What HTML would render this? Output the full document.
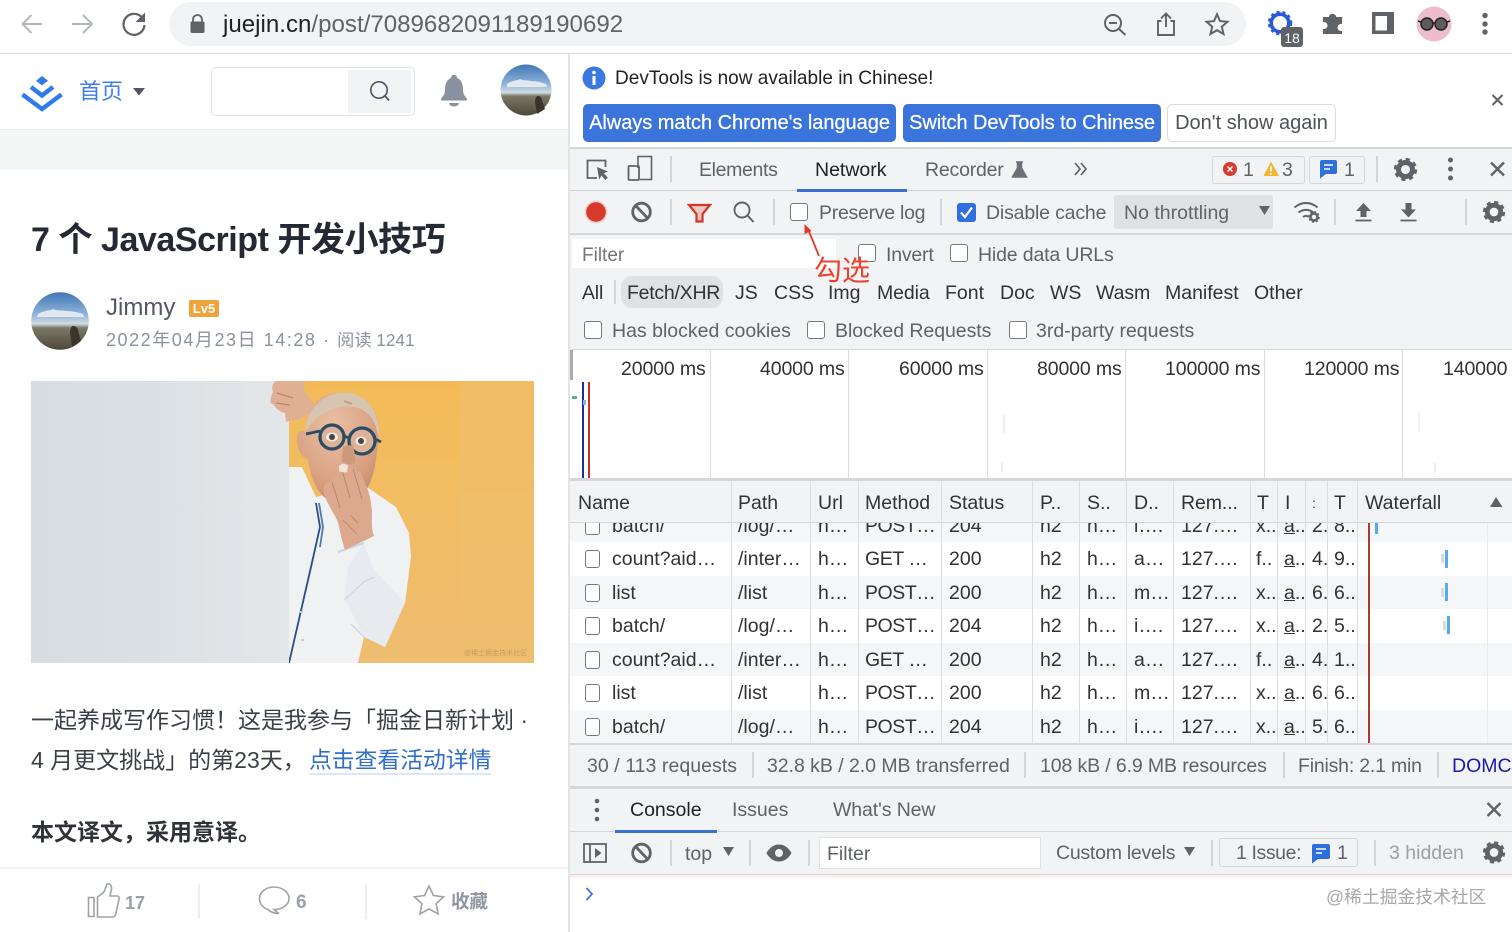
<!DOCTYPE html>
<html lang="zh"><head><meta charset="utf-8"><title>juejin.cn DevTools</title>
<style>
html,body{margin:0;padding:0;width:1512px;height:932px;overflow:hidden;background:#fff}
body{position:relative;font-family:"Liberation Sans","Noto Sans CJK SC",sans-serif;color:#3c4043;filter:blur(.3px)}
.b,.t{position:absolute}
.t{white-space:nowrap;line-height:0;font-size:19.5px;margin-top:.7px}
.g{color:#5f6368}
.d{color:#303236}
.cb{position:absolute;width:16px;height:16px;border:1.5px solid #75787c;border-radius:3px;background:#fff}
.sep{position:absolute;width:1.5px;background:#d3d6d9}
.btn{position:absolute;top:104px;height:38px;border-radius:5px;background:#3b74db;color:#fff;font-size:20px;line-height:39px;text-align:center;white-space:nowrap;-webkit-text-stroke:.25px #fff}
#tbl{position:absolute;left:570px;top:523px;width:942px;height:220px;overflow:hidden;background:#fff}
.r{position:absolute;left:0;width:942px;height:33.5px}
.a{background:#f5f6f7}
.r span{position:absolute;top:17px;line-height:0;white-space:nowrap;font-size:19.5px;color:#303236}
.r i{position:absolute;left:15px;top:8px;width:13px;height:16px;border:1.5px solid #75787c;border-radius:3px;background:#fff}
.c1{left:42px}.c2{left:168px}.c3{left:248px}.c4{left:295px;letter-spacing:-.45px}.c5{left:379px}.c6{left:470px}.c7{left:517px}.c8{left:564px}.c9{left:611px}.c10{left:686px}.c11{left:714px}.c12{left:742px}.c13{left:764px}
.v{position:absolute;width:1px;background:#dcdfe2}
</style></head><body>

<!-- browser chrome -->
<div class="b" style="left:0;top:0;width:1512px;height:53px;background:#fff;border-bottom:1.5px solid #d6d7d9"></div>
<div class="b" style="left:169px;top:2px;width:1077px;height:44px;border-radius:22px;background:#f1f3f4"></div>
<div class="t" style="left:223px;top:24px;font-size:24.1px;color:#202124">juejin.cn<span style="color:#5f6368">/post/7089682091189190692</span></div>

<!-- left page -->
<div class="b" style="left:0;top:129px;width:568px;height:41px;background:#f4f5f5;border-top:1px solid #eeeff0;box-sizing:border-box"></div>
<div class="b" style="left:568px;top:54px;width:2px;height:878px;background:#e3e4e6"></div>
<div class="t" style="left:79px;top:91px;font-size:22px;color:#3d7fe3">首页</div>
<div class="b" style="left:211px;top:67px;width:202px;height:47px;border:1.5px solid #dfe2e6;border-radius:5px;background:#fff"></div>
<div class="b" style="left:348px;top:70px;width:63px;height:43px;background:#f2f3f5"></div>
<div class="t" style="left:31px;top:239px;font-size:34px;font-weight:bold;color:#252933;letter-spacing:-.45px">7 个 JavaScript 开发小技巧</div>
<div class="t" style="left:106px;top:307px;font-size:24px;color:#515767">Jimmy</div>
<div class="b" style="left:189px;top:300px;width:30px;height:17px;border-radius:2px;background:#f0a33a;color:#fff;font-size:13px;font-weight:bold;line-height:17px;text-align:center">Lv5</div>
<div class="t" style="left:106px;top:339px;font-size:18px;color:#8a919f;letter-spacing:1.55px">2022年04月23日 14:28 · <span style="letter-spacing:0;font-size:17.2px">阅读 1241</span></div>
<div class="t" style="left:31px;top:719px;font-size:23px;color:#3a3f47">一起养成写作习惯！这是我参与「掘金日新计划 ·</div>
<div class="t" style="left:31px;top:759px;font-size:23px;color:#3a3f47">4 月更文挑战」的第23天，</div>
<div class="t" style="left:309px;top:759px;font-size:22.8px;color:#2f6fc9">点击查看活动详情</div>
<div class="b" style="left:309px;top:773px;width:182px;height:1.5px;background:#dbe8f8"></div>
<div class="t" style="left:31px;top:831px;font-size:23px;font-weight:bold;color:#2f3238">本文译文，采用意译。</div>
<div class="b" style="left:0;top:867px;width:568px;height:1.5px;background:#f0f1f2"></div>
<div class="b" style="left:198px;top:884px;width:1.5px;height:35px;background:#eceef0"></div>
<div class="b" style="left:365px;top:884px;width:1.5px;height:35px;background:#eceef0"></div>
<div class="t" style="left:125px;top:902px;font-size:18px;font-weight:bold;color:#9aa0a8">17</div>
<div class="t" style="left:296px;top:902px;font-size:19px;font-weight:bold;color:#9aa0a8">6</div>
<div class="t" style="left:451px;top:901px;font-size:18.5px;font-weight:bold;color:#8f96a1">收藏</div>

<!-- devtools backgrounds -->
<div class="b" style="left:570px;top:147px;width:942px;height:640px;background:#f1f3f4"></div>
<div class="b" style="left:570px;top:147px;width:942px;height:1.5px;background:#d5d7da"></div>
<div class="b" style="left:570px;top:189.5px;width:942px;height:1.5px;background:#cfd2d5"></div>
<div class="b" style="left:797px;top:188.5px;width:110px;height:3px;background:#3a70d0"></div>
<div class="b" style="left:570px;top:232.5px;width:942px;height:2px;background:#d5d7da"></div>
<div class="b" style="left:572px;top:239px;width:264px;height:29px;background:#fff"></div>
<div class="b" style="left:621px;top:276px;width:102px;height:32px;border-radius:11px;background:#dfe1e3"></div>
<div class="b" style="left:570px;top:349px;width:942px;height:1.5px;background:#d5d7da"></div>
<div class="b" style="left:570px;top:350px;width:942px;height:128px;background:#fff"></div>
<div class="b" style="left:570px;top:350px;width:2.5px;height:30px;background:#a9abae"></div>
<div class="b" style="left:570px;top:478px;width:942px;height:3px;background:#d5d7da"></div>
<div class="v" style="left:710px;top:350px;height:128px"></div>
<div class="v" style="left:848px;top:350px;height:128px"></div>
<div class="v" style="left:987px;top:350px;height:128px"></div>
<div class="v" style="left:1125px;top:350px;height:128px"></div>
<div class="v" style="left:1264px;top:350px;height:128px"></div>
<div class="v" style="left:1402px;top:350px;height:128px"></div>
<div class="b" style="left:582px;top:382px;width:1.5px;height:96px;background:#1c2f96"></div>
<div class="b" style="left:588px;top:382px;width:1.5px;height:96px;background:#c8322a"></div>
<div class="b" style="left:572px;top:396px;width:5px;height:3px;background:#57b58c"></div>
<div class="b" style="left:583px;top:400px;width:3px;height:5px;background:#7fb4ec"></div>
<div class="b" style="left:1003px;top:415px;width:1.5px;height:18px;background:#e8eff6"></div>
<div class="b" style="left:1001px;top:462px;width:1.5px;height:10px;background:#eceff2"></div>
<div class="b" style="left:1418px;top:412px;width:1.5px;height:20px;background:#eef2f6"></div>
<div class="b" style="left:1434px;top:463px;width:1.5px;height:10px;background:#eceff2"></div>

<!-- infobar -->
<div class="t d" style="left:615px;top:78px;font-size:19.05px;color:#202124">DevTools is now available in Chinese!</div>
<div class="btn" style="left:583px;width:313px;letter-spacing:-.03px">Always match Chrome's language</div>
<div class="btn" style="left:903px;width:258px;letter-spacing:-.08px">Switch DevTools to Chinese</div>
<div class="btn" style="left:1167px;width:167px;background:#fff;border:1px solid #dadce0;top:104px;height:36px;color:#4d5156;-webkit-text-stroke:0;line-height:37px">Don't show again</div>

<!-- tabs -->
<div class="t g" style="left:699px;top:169px;letter-spacing:-.35px">Elements</div>
<div class="t" style="left:815px;top:169px;color:#202124">Network</div>
<div class="t g" style="left:925px;top:169px;letter-spacing:-.2px">Recorder</div>
<div class="b" style="left:1212px;top:156px;width:91px;height:26px;border:1.5px solid #d4d7da;border-radius:3px"></div>
<div class="b" style="left:1309px;top:156px;width:54px;height:26px;border:1.5px solid #d4d7da;border-radius:3px"></div>
<div class="t g" style="left:1243px;top:169px">1</div>
<div class="t g" style="left:1282px;top:169px">3</div>
<div class="t g" style="left:1344px;top:169px">1</div>
<div class="sep" style="left:670px;top:156px;height:26px"></div>
<div class="sep" style="left:1376px;top:156px;height:26px"></div>

<!-- toolbar -->
<div class="sep" style="left:670px;top:199px;height:26px"></div>
<div class="sep" style="left:773px;top:199px;height:26px"></div>
<div class="sep" style="left:940px;top:199px;height:26px"></div>
<div class="sep" style="left:1334px;top:199px;height:26px"></div>
<div class="sep" style="left:1465px;top:199px;height:26px"></div>
<div class="cb" style="left:790px;top:203px"></div>
<div class="t g" style="left:819px;top:212px;letter-spacing:-.27px">Preserve log</div>
<div class="t g" style="left:986px;top:212px;letter-spacing:-.17px">Disable cache</div>
<div class="b" style="left:1114px;top:195px;width:159px;height:34px;border-radius:3px;background:#dfe1e4"></div>
<div class="t g" style="left:1124px;top:212px">No throttling</div>

<!-- filter rows -->
<div class="t" style="left:582px;top:255px;font-size:19px;color:#757575">Filter</div>
<div class="cb" style="left:858px;top:244px"></div>
<div class="t g" style="left:886px;top:254px;letter-spacing:-.2px">Invert</div>
<div class="cb" style="left:950px;top:244px"></div>
<div class="t g" style="left:978px;top:254px;letter-spacing:-.15px">Hide data URLs</div>
<div class="sep" style="left:614px;top:280px;height:24px"></div>
<div class="t d" style="left:582px;top:292px;letter-spacing:-.2px">All</div>
<div class="t d" style="left:627px;top:292px;letter-spacing:-.25px">Fetch/XHR</div>
<div class="t d" style="left:735px;top:292px">JS</div>
<div class="t d" style="left:774px;top:292px">CSS</div>
<div class="t d" style="left:828px;top:292px">Img</div>
<div class="t d" style="left:877px;top:292px;letter-spacing:-.1px">Media</div>
<div class="t d" style="left:945px;top:292px">Font</div>
<div class="t d" style="left:1000px;top:292px">Doc</div>
<div class="t d" style="left:1050px;top:292px">WS</div>
<div class="t d" style="left:1096px;top:292px;letter-spacing:-.1px">Wasm</div>
<div class="t d" style="left:1165px;top:292px">Manifest</div>
<div class="t d" style="left:1254px;top:292px">Other</div>
<div class="cb" style="left:584px;top:321px"></div>
<div class="t g" style="left:612px;top:330px">Has blocked cookies</div>
<div class="cb" style="left:807px;top:321px"></div>
<div class="t g" style="left:835px;top:330px;letter-spacing:-.05px">Blocked Requests</div>
<div class="cb" style="left:1009px;top:321px"></div>
<div class="t g" style="left:1036px;top:330px">3rd-party requests</div>

<!-- timeline labels -->
<div class="t d" style="left:621px;top:368px;letter-spacing:-.12px">20000 ms</div>
<div class="t d" style="left:760px;top:368px;letter-spacing:-.12px">40000 ms</div>
<div class="t d" style="left:899px;top:368px;letter-spacing:-.12px">60000 ms</div>
<div class="t d" style="left:1037px;top:368px;letter-spacing:-.12px">80000 ms</div>
<div class="t d" style="left:1165px;top:368px;letter-spacing:-.12px">100000 ms</div>
<div class="t d" style="left:1304px;top:368px;letter-spacing:-.12px">120000 ms</div>
<div class="t d" style="left:1443px;top:368px;letter-spacing:-.12px">140000</div>

<!-- table header -->
<div class="b" style="left:570px;top:481px;width:942px;height:42px;background:#f1f3f4;border-bottom:1.5px solid #d5d7da;box-sizing:border-box"></div>
<div class="t d" style="left:578px;top:502px">Name</div>
<div class="t d" style="left:738px;top:502px">Path</div>
<div class="t d" style="left:818px;top:502px">Url</div>
<div class="b" style="left:865px;top:489px;width:64px;height:26px;overflow:hidden"><div class="t d" style="left:0;top:13px">Method</div></div>
<div class="t d" style="left:949px;top:502px">Status</div>
<div class="t d" style="left:1040px;top:502px">P..</div>
<div class="t d" style="left:1087px;top:502px">S..</div>
<div class="t d" style="left:1134px;top:502px">D..</div>
<div class="t d" style="left:1181px;top:502px;letter-spacing:-.1px">Rem...</div>
<div class="t d" style="left:1257px;top:502px">T</div>
<div class="t d" style="left:1285px;top:502px">I</div>
<div class="t d" style="left:1312px;top:502px;font-size:14px">:</div>
<div class="t d" style="left:1334px;top:502px">T</div>
<div class="t d" style="left:1365px;top:502px">Waterfall</div>

<!-- table rows -->
<div id="tbl">
<div class="r a" style="top:-14.5px"><i></i><span class="c1">batch/</span><span class="c2">/log/…</span><span class="c3">h…</span><span class="c4">POST…</span><span class="c5">204</span><span class="c6">h2</span><span class="c7">h…</span><span class="c8">i….</span><span class="c9">127.…</span><span class="c10">x..</span><span class="c11"><u>a</u>..</span><span class="c12">2.</span><span class="c13">8..</span></div>
<div class="r" style="top:19px"><i></i><span class="c1">count?aid…</span><span class="c2">/inter…</span><span class="c3">h…</span><span class="c4">GET …</span><span class="c5">200</span><span class="c6">h2</span><span class="c7">h…</span><span class="c8">a…</span><span class="c9">127.…</span><span class="c10">f..</span><span class="c11"><u>a</u>..</span><span class="c12">4.</span><span class="c13">9..</span></div>
<div class="r a" style="top:52.5px"><i></i><span class="c1">list</span><span class="c2">/list</span><span class="c3">h…</span><span class="c4">POST…</span><span class="c5">200</span><span class="c6">h2</span><span class="c7">h…</span><span class="c8">m…</span><span class="c9">127.…</span><span class="c10">x..</span><span class="c11"><u>a</u>..</span><span class="c12">6.</span><span class="c13">6..</span></div>
<div class="r" style="top:86px"><i></i><span class="c1">batch/</span><span class="c2">/log/…</span><span class="c3">h…</span><span class="c4">POST…</span><span class="c5">204</span><span class="c6">h2</span><span class="c7">h…</span><span class="c8">i….</span><span class="c9">127.…</span><span class="c10">x..</span><span class="c11"><u>a</u>..</span><span class="c12">2.</span><span class="c13">5..</span></div>
<div class="r a" style="top:119.5px"><i></i><span class="c1">count?aid…</span><span class="c2">/inter…</span><span class="c3">h…</span><span class="c4">GET …</span><span class="c5">200</span><span class="c6">h2</span><span class="c7">h…</span><span class="c8">a…</span><span class="c9">127.…</span><span class="c10">f..</span><span class="c11"><u>a</u>..</span><span class="c12">4.</span><span class="c13">1..</span></div>
<div class="r" style="top:153px"><i></i><span class="c1">list</span><span class="c2">/list</span><span class="c3">h…</span><span class="c4">POST…</span><span class="c5">200</span><span class="c6">h2</span><span class="c7">h…</span><span class="c8">m…</span><span class="c9">127.…</span><span class="c10">x..</span><span class="c11"><u>a</u>..</span><span class="c12">6.</span><span class="c13">6..</span></div>
<div class="r a" style="top:186.5px"><i></i><span class="c1">batch/</span><span class="c2">/log/…</span><span class="c3">h…</span><span class="c4">POST…</span><span class="c5">204</span><span class="c6">h2</span><span class="c7">h…</span><span class="c8">i….</span><span class="c9">127.…</span><span class="c10">x..</span><span class="c11"><u>a</u>..</span><span class="c12">5.</span><span class="c13">6..</span></div>
</div>
<div class="v" style="left:731px;top:481px;height:262px"></div>
<div class="v" style="left:810px;top:481px;height:262px"></div>
<div class="v" style="left:858px;top:481px;height:262px"></div>
<div class="v" style="left:941px;top:481px;height:262px"></div>
<div class="v" style="left:1032px;top:481px;height:262px"></div>
<div class="v" style="left:1079px;top:481px;height:262px"></div>
<div class="v" style="left:1126px;top:481px;height:262px"></div>
<div class="v" style="left:1173px;top:481px;height:262px"></div>
<div class="v" style="left:1250px;top:481px;height:262px"></div>
<div class="v" style="left:1277px;top:481px;height:262px"></div>
<div class="v" style="left:1305px;top:481px;height:262px"></div>
<div class="v" style="left:1327px;top:481px;height:262px"></div>
<div class="v" style="left:1357px;top:481px;height:262px"></div>
<div class="v" style="left:1487px;top:523px;height:220px;background:#e8eaec"></div>
<div class="b" style="left:1368px;top:523px;width:1.5px;height:220px;background:#a83a32"></div>
<div class="b" style="left:1375px;top:523px;width:3px;height:11px;background:#5aa9ee"></div>
<div class="b" style="left:1445px;top:550px;width:3px;height:18px;background:#5aa9ee"></div>
<div class="b" style="left:1441px;top:554px;width:3px;height:9px;background:#d9dce0"></div>
<div class="b" style="left:1445px;top:583px;width:3px;height:18px;background:#5aa9ee"></div>
<div class="b" style="left:1441px;top:588px;width:3px;height:9px;background:#d9dce0"></div>
<div class="b" style="left:1447px;top:616px;width:3px;height:18px;background:#5aa9ee"></div>
<div class="b" style="left:1443px;top:621px;width:3px;height:9px;background:#d9dce0"></div>

<!-- status bar -->
<div class="b" style="left:570px;top:743px;width:942px;height:1.5px;background:#d5d7da"></div>
<div class="t g" style="left:587px;top:765px;letter-spacing:.05px">30 / 113 requests</div>
<div class="t g" style="left:767px;top:765px;letter-spacing:-.04px">32.8 kB / 2.0 MB transferred</div>
<div class="t g" style="left:1040px;top:765px;letter-spacing:-.12px">108 kB / 6.9 MB resources</div>
<div class="t g" style="left:1298px;top:765px;letter-spacing:-.2px">Finish: 2.1 min</div>
<div class="t" style="left:1452px;top:765px;color:#1a1aa6">DOMCo</div>
<div class="sep" style="left:752px;top:752px;height:26px"></div>
<div class="sep" style="left:1024px;top:752px;height:26px"></div>
<div class="sep" style="left:1283px;top:752px;height:26px"></div>
<div class="sep" style="left:1437px;top:752px;height:26px"></div>

<!-- console drawer -->
<div class="b" style="left:570px;top:786px;width:942px;height:3px;background:#d5d7da"></div>
<div class="b" style="left:570px;top:789px;width:942px;height:86px;background:#f1f3f4"></div>
<div class="b" style="left:570px;top:830.5px;width:942px;height:1.5px;background:#d5d7da"></div>
<div class="b" style="left:615px;top:829.5px;width:102px;height:3px;background:#3a70d0"></div>
<div class="b" style="left:570px;top:873.5px;width:942px;height:1.5px;background:#d5d7da"></div>
<div class="b" style="left:570px;top:875px;width:942px;height:2.5px;background:#fdecec"></div>
<div class="t" style="left:630px;top:809.5px;color:#202124">Console</div>
<div class="t g" style="left:732px;top:809.5px">Issues</div>
<div class="t g" style="left:833px;top:809.5px;letter-spacing:-.1px">What's New</div>
<div class="sep" style="left:670px;top:840px;height:26px"></div>
<div class="t g" style="left:685px;top:853px">top</div>
<div class="sep" style="left:749px;top:840px;height:26px"></div>
<div class="sep" style="left:808px;top:840px;height:26px"></div>
<div class="b" style="left:819px;top:837px;width:220px;height:30px;background:#fff;border:1px solid #dfe1e4"></div>
<div class="t" style="left:827px;top:853px;color:#5f6368">Filter</div>
<div class="t g" style="left:1056px;top:852px;letter-spacing:-.25px">Custom levels</div>
<div class="sep" style="left:1211px;top:840px;height:26px"></div>
<div class="b" style="left:1219px;top:838px;width:137px;height:27px;border:1.5px solid #d4d7da;border-radius:3px"></div>
<div class="t g" style="left:1236px;top:852px;letter-spacing:-.4px">1 Issue:</div>
<div class="t g" style="left:1337px;top:852px">1</div>
<div class="sep" style="left:1374px;top:840px;height:26px"></div>
<div class="t" style="left:1389px;top:852px;color:#9aa0a6">3 hidden</div>
<div class="t" style="left:1326px;top:896px;font-size:17.8px;color:#a5a7aa">@稀土掘金技术社区</div>
<div class="t" style="left:814px;top:270px;font-size:28px;color:#e8432e">勾选</div>

<!-- all icons and illustrations -->
<svg class="b" style="left:0;top:0" width="1512" height="932" viewBox="0 0 1512 932" fill="none">
<defs>
<symbol id="gear" viewBox="-13 -13 26 26" overflow="visible"><circle r="7.6" stroke="#5f6368" stroke-width="5.4"/><circle r="10.6" stroke="#5f6368" stroke-width="4" stroke-dasharray="4.4 3.9"/></symbol>
<linearGradient id="sky" x1="0" y1="0" x2="0" y2="1"><stop offset="0" stop-color="#4176b8"/><stop offset=".38" stop-color="#8fb3d8"/><stop offset=".55" stop-color="#cfdbe3"/><stop offset=".62" stop-color="#7b7868"/><stop offset="1" stop-color="#4e483a"/></linearGradient>
<linearGradient id="board" x1="0" y1="0" x2="1" y2="0"><stop offset="0" stop-color="#d6dce0"/><stop offset=".55" stop-color="#dce1e5"/><stop offset="1" stop-color="#e3e7ea"/></linearGradient>
<linearGradient id="wall" x1="0" y1="0" x2="0" y2="1"><stop offset="0" stop-color="#f3bb58"/><stop offset="1" stop-color="#efbd70"/></linearGradient>
<radialGradient id="skin" cx=".45" cy=".3" r=".75"><stop offset="0" stop-color="#ecc0a4"/><stop offset=".7" stop-color="#d79f80"/><stop offset="1" stop-color="#c08566"/></radialGradient>
<clipPath id="ph"><rect x="31" y="381" width="503" height="282"/></clipPath>
</defs>

<!-- browser icons -->
<path d="M42 24H23M31.500 15l-9 9 9 9" stroke="#b4b7ba" stroke-width="2"/>
<path d="M72 24h19M83 15l9 9-9 9" stroke="#b4b7ba" stroke-width="2"/>
<path d="M142 17.500A10.500 10.500 0 1 0 144.500 25" stroke="#5f6368" stroke-width="2.200"/>
<path d="M145 12.500v9.500h-9.500z" fill="#5f6368"/>
<path d="M193 22v-2.500a4.500 4.500 0 0 1 9 0V22" stroke="#5f6368" stroke-width="1.800"/>
<rect x="190.500" y="21.500" width="14" height="11.500" rx="1.500" fill="#5f6368"/>
<circle cx="1113" cy="23" r="8" stroke="#5f6368" stroke-width="2"/><path d="M1119 29l6.500 6M1109 23h8" stroke="#5f6368" stroke-width="2"/>
<path d="M1161.500 21h-3.500v14h16V21h-3.500M1166 27V14M1161 18.500l5-5 5 5" stroke="#5f6368" stroke-width="1.900"/>
<path d="M1217 14.200l3 6.900 7.400.7-5.600 4.900 1.700 7.300-6.500-3.800-6.500 3.800 1.700-7.300-5.600-4.900 7.400-.7z" stroke="#5f6368" stroke-width="2"/>
<circle cx="1280" cy="23" r="8.800" stroke="#2a5bd7" stroke-width="3.600"/>
<circle cx="1280" cy="23" r="11" stroke="#2a5bd7" stroke-width="2.500" stroke-dasharray="3 3"/>
<rect x="1281" y="27" width="22" height="20" rx="3" fill="#5f6368"/>
<path d="M1329 16a4 4 0 0 1 7 0l.300 1h5.700v7h-1a3.500 3.500 0 0 0 0 7h1v3h-19v-5h1a3.500 3.500 0 0 0 0-7h-1v-5h6z" fill="#5f6368"/>
<path d="M1372 12h22v22h-22zM1375.500 16v14.500h11.500V16z" fill="#5f6368" fill-rule="evenodd"/>
<circle cx="1434" cy="24" r="17.500" fill="#ecbdcc"/>
<circle cx="1427" cy="24" r="6" fill="#5c5c5c" stroke="#222" stroke-width="1.500"/><circle cx="1441" cy="24" r="6" fill="#5c5c5c" stroke="#222" stroke-width="1.500"/><path d="M1418 21l3 1M1433 23h2M1447 22l3-1" stroke="#222" stroke-width="1.500"/>
<circle cx="1485" cy="15.500" r="2.700" fill="#5f6368"/><circle cx="1485" cy="24" r="2.700" fill="#5f6368"/><circle cx="1485" cy="32" r="2.700" fill="#5f6368"/>

<!-- juejin logo & nav -->
<path d="M42 76l6 4.700-6 4.700-6-4.700z" fill="#2f7bea"/>
<path d="M31 87l11 8.500 11-8.500" stroke="#2f7bea" stroke-width="4.500" />
<path d="M22.500 94.500L42 109l19.500-14.500" stroke="#2f7bea" stroke-width="4.500"/>
<path d="M133 88h12l-6 7.500z" fill="#515767"/>
<circle cx="379" cy="90" r="8.200" stroke="#515767" stroke-width="1.700"/><path d="M385 96l4 4.500" stroke="#515767" stroke-width="1.800"/>
<path d="M454 75c2 0 3 1 3 3 5 2 6 7 6 12 0 4 2 6 4 9v1.500h-26V99c2-3 4-5 4-9 0-5 1-10 6-12 0-2 1-3 3-3zM449 103h10a5 3.500 0 0 1-10 0z" fill="#8a919f"/>
<circle cx="526" cy="90" r="25.500" fill="url(#sky)"/>
<path d="M507 84c5-4 10-3 13-5 4 2 8 1 11 2 5 0 10 1 15 3l1 3h-40z" fill="#eef1f3" opacity=".85"/>
<path d="M538 96c2.500 0 4 2 4 4l3 9-8 5-2-12c0-3 1-6 3-6z" fill="#3a342c"/>
<circle cx="60" cy="321" r="28.800" fill="url(#sky)"/>
<path d="M38 314c6-4 12-3 15-5 4 2 9 1 13 2 5 0 11 1 17 3l1 3H37z" fill="#eef1f3" opacity=".85"/>
<path d="M73 326c3 0 5 2 5 5l3 10-9 6-2-14c0-3 1-7 3-7z" fill="#3a342c"/>

<!-- bottom action bar icons -->
<path d="M88.500 897.500h5.500v19h-5.500zM97.500 897l6.500-5 3-8c3-1 5 2 4.500 5l-1.500 7h7c2 0 2.500 2 2 3.500l-3.500 15c-.5 1.500-1.500 2.500-3 2.500H97.500z" stroke="#9ea3aa" stroke-width="1.600"/>
<path d="M274 887c8 0 15 5 15 11.500 0 6-6.500 11-14 11l-1 0c2 2 3 3 5 4-4 0-8-1-11-4-5-1.500-8.500-6-8.500-11 0-6.500 6.500-11.500 14.500-11.500z" stroke="#9ea3aa" stroke-width="1.600"/>
<path d="M429 886l4.400 9.500 10.200 1.300-7.500 7 2 10.200-9.100-5.100-9.100 5.100 2-10.200-7.500-7 10.200-1.300z" stroke="#9ea3aa" stroke-width="1.600"/>

<!-- hero photo -->
<g clip-path="url(#ph)">
<rect x="289" y="381" width="245" height="282" fill="url(#wall)"/>
<path d="M460 381h74v282h-74z" fill="#f0bd6e" opacity=".5"/>
<!-- shirt -->
<path d="M289 467l13 0 14 30 48-12 32 22 13 26 2 24-6 46-20 44-21-10-6 26h-69z" fill="#eff1f3"/>
<path d="M364 543l8 24 16 18 17 18-20 44-21-10-20-40 4-30 16-24z" fill="#e7ebef"/>
<path d="M338 552l26-9" stroke="#cfd5db" stroke-width="2"/>
<path d="M344 600l20-18 10-5M351 624l13 13" stroke="#d3d8de" stroke-width="1.500"/>
<path d="M316 503l4 24-9 40-22 96" stroke="#2d4d86" stroke-width="1.800"/>
<path d="M319 503l4 24-3 20" stroke="#4f78b0" stroke-width="1.800"/>
<path d="M301 640h3M300 612h3" stroke="#c5ccd3" stroke-width="2"/>
<!-- head -->
<path d="M305 432c-6-3-9 2-8 10 1 9 5 16 11 17 2 15 6 27 14 36 8 9 22 12 34 6 12-7 19-27 21-50 2-12 3-23 0-33-5-16-19-25-38-25-20 0-32 14-34 39z" fill="url(#skin)"/>
<path d="M306 432c-2-16 12-36 33-39 18-2 32 6 38 26 1 5 3 12 2 20-2-10-5-20-11-25-8-8-20-9-32-6-13 4-24 12-30 24z" fill="#d7c5b1"/>
<path d="M344 401l8 3" stroke="#c69a80" stroke-width="2"/>
<!-- glasses -->
<circle cx="332" cy="437" r="12" fill="#dcb298" stroke="#2d4c63" stroke-width="3.300"/>
<circle cx="362" cy="441" r="13" fill="#dcb298" stroke="#2d4c63" stroke-width="3.300"/>
<path d="M306 434l14-3M344 436l5 2M375 439l6 3" stroke="#2d4c63" stroke-width="2.800"/>
<ellipse cx="332" cy="437" rx="6" ry="4.500" fill="#efe9e3"/><circle cx="332" cy="437" r="3" fill="#4b4643"/>
<ellipse cx="361" cy="441" rx="5.500" ry="4.500" fill="#efe9e3"/><circle cx="361" cy="441" r="3" fill="#4b4643"/>
<path d="M343 446c0 6-2 11-1 15 2 4 11 5 13 1 1-5-1-11-2-17z" fill="#cd9a7e"/>
<!-- covering hand -->
<path d="M324 492c-1-8 3-12 7-10l2-8c1-6 6-8 9-6 2-5 8-5 11-1l4 6 3-2 6 14c3 7 5 15 6 26 0 8-1 17 2 25l-29 14c-4-11-5-22-8-30-6-12-12-20-13-28z" fill="#dda98e"/>
<path d="M332 482l8 26M342 470l8 28M353 469l9 30" stroke="#bb8669" stroke-width="1"/>
<path d="M339 466c3-3 7-3 9 0l-1 6c-3 1-6 0-8-1z" fill="#f4e2d8"/>
<path d="M343 520l14 14M350 515l8 8" stroke="#bf8d70" stroke-width="1"/>
<!-- board -->
<rect x="31" y="381" width="258" height="282" fill="url(#board)"/>
<!-- top hand -->
<path d="M273 392c-2-5 0-9 3-11h30c-2 3-3 5-2 8 2 6 8 9 9 15 1 6-5 10-9 13-5 3-13 3-18 5l-1-9c-6-1-9-5-12-9-3 0-3-4-2-6 0-2 1-4 2-6z" fill="#dfb094"/>
<path d="M277 393l16 5M276 403l14 2" stroke="#b8866b" stroke-width="1.200"/>
</g>
<text x="464" y="655" font-size="7px" fill="#c69c5d" font-family="Liberation Sans,Noto Sans CJK SC,sans-serif">@稀土掘金技术社区</text>

<!-- infobar icons -->
<circle cx="594" cy="78" r="11.500" fill="#3b78e0"/><circle cx="594" cy="72.500" r="1.800" fill="#fff"/><rect x="592.500" y="76" width="3" height="9" fill="#fff"/>
<path d="M1492.500 95l10 10M1502.500 95l-10 10" stroke="#5f6368" stroke-width="2"/>

<!-- tab bar icons -->
<path d="M597 178h-9.500v-17.500h18V167" stroke="#5f6368" stroke-width="1.800"/>
<path d="M597 167l11 4.500-4.200 1.800 4 4.500-2.500 2.200-3.800-4.500-2.300 4z" fill="#5f6368"/>
<path d="M638 168v-11.500h13.500v23H640" stroke="#5f6368" stroke-width="1.600"/><rect x="628.500" y="166" width="10.500" height="14" rx="1" stroke="#5f6368" stroke-width="1.800"/>
<path d="M1016 162h7M1017.500 162v6l-5 9h14l-5-9v-6" fill="#6c7074" stroke="#6c7074" stroke-width="1.500"/>
<path d="M1075 163l5 6-5 6M1081 163l5 6-5 6" stroke="#5f6368" stroke-width="1.700"/>
<circle cx="1230" cy="169" r="7" fill="#d93a2f"/><path d="M1227.500 166.500l5 5M1232.500 166.500l-5 5" stroke="#fff" stroke-width="1.500"/>
<path d="M1271 161.500l8 14.500h-15.500z" fill="#f2b632"/><path d="M1271 166v5.500M1271 173v1.500" stroke="#fff" stroke-width="1.500"/>
<path d="M1322 160h13a2 2 0 0 1 2 2v10a2 2 0 0 1-2 2h-9l-6 4.500V162a2 2 0 0 1 2-2z" fill="#2e6fdc"/><path d="M1324 165h9M1324 169h6" stroke="#fff" stroke-width="1.500"/>
<use href="#gear" x="1393.500" y="157.500" width="24" height="24"/>
<circle cx="1450.500" cy="160" r="2.500" fill="#5f6368"/><circle cx="1450.500" cy="169" r="2.500" fill="#5f6368"/><circle cx="1450.500" cy="178" r="2.500" fill="#5f6368"/>
<path d="M1491 162.500l13 13M1504 162.500l-13 13" stroke="#5f6368" stroke-width="2.400"/>

<!-- network toolbar icons -->
<circle cx="596" cy="212" r="11.500" fill="#f3b8b2" opacity=".6"/><circle cx="596" cy="212" r="9.800" fill="#d63a2a"/>
<circle cx="641.500" cy="212" r="8.800" stroke="#5f6368" stroke-width="2.800"/><path d="M635.500 205.500l12.500 13" stroke="#5f6368" stroke-width="2.800"/>
<path d="M689 205h21l-7.500 9v7.500h-6V214z" fill="#f0c9c3" stroke="#d2362a" stroke-width="2.200"/>
<circle cx="742" cy="210" r="7.500" stroke="#5f6368" stroke-width="1.900"/><path d="M747.500 215.500l6 6.500" stroke="#5f6368" stroke-width="2"/>
<rect x="957" y="203" width="19" height="19" rx="3" fill="#2f6fe0"/><path d="M961 212.500l4 4.500 7-9.500" stroke="#fff" stroke-width="2.200"/>
<path d="M1259 206h11l-5.500 9z" fill="#5f6368"/>
<path d="M1294.500 207.500c7-6 16-6 23 0M1298.500 212.500c4.500-3.500 10.500-3.500 15 0M1303 217c2-1.500 4-1.500 6 0" stroke="#5f6368" stroke-width="2"/>
<use href="#gear" x="1308" y="211" width="12" height="12"/>
<path d="M1363.500 203l7.500 8h-4.500v6h-6v-6h-4.500z" fill="#5f6368"/><path d="M1355.500 220.500h16" stroke="#5f6368" stroke-width="1.800"/>
<path d="M1405.500 203h6v6.500h4.500l-7.500 8-7.500-8h4.500z" fill="#5f6368"/><path d="M1400.500 220.500h16" stroke="#5f6368" stroke-width="1.800"/>
<use href="#gear" x="1482.500" y="200.500" width="23" height="23"/>

<!-- annotation arrow -->
<path d="M819 256l-11-27" stroke="#e0392a" stroke-width="1.800"/><path d="M804.500 224l7 7-7 3z" fill="#e0392a"/>

<!-- waterfall sort arrow -->
<path d="M1490 507l6-10 6.500 10z" fill="#5f6368"/>

<!-- console icons -->
<circle cx="597" cy="801" r="2.300" fill="#5f6368"/><circle cx="597" cy="810" r="2.300" fill="#5f6368"/><circle cx="597" cy="819" r="2.300" fill="#5f6368"/>
<path d="M1487.500 803l13 13M1500.500 803l-13 13" stroke="#5f6368" stroke-width="2.400"/>
<rect x="584" y="844" width="22" height="18" stroke="#5f6368" stroke-width="1.800"/><path d="M590 844v18" stroke="#5f6368" stroke-width="1.800"/><path d="M595 848l6.500 5-6.500 5z" fill="#5f6368"/>
<circle cx="641.500" cy="853" r="8.800" stroke="#5f6368" stroke-width="2.800"/><path d="M635.500 846.500l12.500 13" stroke="#5f6368" stroke-width="2.800"/>
<path d="M723 847h11l-5.500 9z" fill="#5f6368"/>
<path d="M766.500 853c3-5.500 7.500-8.500 12.500-8.500s9.500 3 12.500 8.500c-3 5.500-7.500 8.500-12.500 8.500s-9.500-3-12.500-8.500zM779 849a4 4 0 1 0 .01 0z" fill="#5f6368" fill-rule="evenodd"/>
<path d="M1184 847h11l-5.500 9z" fill="#5f6368"/>
<path d="M1314 844h14a2 2 0 0 1 2 2v11a2 2 0 0 1-2 2h-10l-6 4.500V846a2 2 0 0 1 2-2z" fill="#2e6fdc"/><path d="M1316 849h10M1316 853h6" stroke="#fff" stroke-width="1.500"/>
<use href="#gear" x="1482.500" y="841" width="23" height="23"/>
<path d="M586.500 888l5.500 6-5.500 6" stroke="#3b78e0" stroke-width="1.800"/>
</svg>

<div class="t" style="left:1292px;top:37px;font-size:14px;color:#fff;transform:translateX(-50%)">18</div>
</body></html>
